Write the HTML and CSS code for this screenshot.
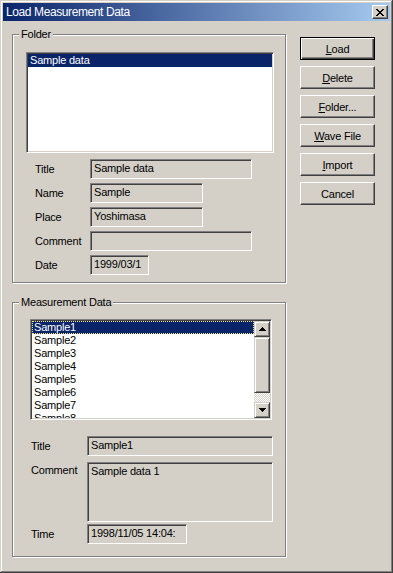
FILE: index.html
```html
<!DOCTYPE html>
<html lang="en">
<head>
  <meta charset="UTF-8">
  <meta name="viewport" content="width=device-width, initial-scale=1.0">
  <title>Load Measurement Data</title>
  <link rel="stylesheet" href="styles.css">
</head>
<body>
  <div class="window">
    <div class="titlebar">
      <span class="caption">Load Measurement Data</span>
      <span class="close-btn">
        <svg width="8" height="7" viewBox="0 0 8 7"><path d="M0 0h2v1h1v1h2V1h1V0h2v1H7v1H6v1H5v1h1v1h1v1h1v1H6V6H5V5H3v1H2v1H0V6h1V5h1V4h1V3H2V2H1V1H0z" fill="#000"/></svg>
      </span>
    </div>

    <div class="client">
      <div class="groups">
        <!-- Folder -->
        <div class="group group-folder">
          <span class="group-title">Folder</span>
          <div class="listbox folder-list">
            <div class="item selected">Sample data</div>
          </div>
          <div class="fields fields-folder">
            <div class="field"><span class="field-label">Title</span><span class="edit w-162">Sample data</span></div>
            <div class="field"><span class="field-label">Name</span><span class="edit w-113">Sample</span></div>
            <div class="field"><span class="field-label">Place</span><span class="edit w-113">Yoshimasa</span></div>
            <div class="field"><span class="field-label">Comment</span><span class="edit w-162"></span></div>
            <div class="field"><span class="field-label">Date</span><span class="edit w-59">1999/03/1</span></div>
          </div>
        </div>

        <!-- Measurement Data -->
        <div class="group group-measure">
          <span class="group-title">Measurement Data</span>
          <div class="listbox measure-list">
            <div class="items">
              <div class="item selected focused">Sample1</div>
              <div class="item">Sample2</div>
              <div class="item">Sample3</div>
              <div class="item">Sample4</div>
              <div class="item">Sample5</div>
              <div class="item">Sample6</div>
              <div class="item">Sample7</div>
              <div class="item">Sample8</div>
            </div>
            <div class="scrollbar">
              <span class="sb-btn"><svg width="7" height="4" viewBox="0 0 7 4"><path d="M3 0h1v1h1v1h1v1h1v1H0V3h1V2h1V1h1z" fill="#000"/></svg></span>
              <span class="sb-thumb"></span>
              <span class="sb-track"></span>
              <span class="sb-btn"><svg width="7" height="4" viewBox="0 0 7 4"><path d="M0 0h7v1H6v1H5v1H4v1H3V3H2V2H1V1H0z" fill="#000"/></svg></span>
            </div>
          </div>
          <div class="fields fields-measure">
            <div class="field"><span class="field-label">Title</span><span class="edit w-186">Sample1</span></div>
            <div class="field field-tall"><span class="field-label">Comment</span><span class="edit w-186 h-60">Sample data 1</span></div>
            <div class="field"><span class="field-label">Time</span><span class="edit w-100">1998/11/05 14:04:</span></div>
          </div>
        </div>
      </div>

      <div class="buttons">
        <button class="btn btn-default"><u>L</u>oad</button>
        <button class="btn"><u>D</u>elete</button>
        <button class="btn"><u>F</u>older...</button>
        <button class="btn"><u>W</u>ave File</button>
        <button class="btn"><u>I</u>mport</button>
        <button class="btn">Cancel</button>
      </div>
    </div>
  </div>
</body>
</html>
```

FILE: styles.css
```css
body {
  margin: 0;
  background-color: #d4d0c8;
  font-family: "Liberation Sans", Arial, sans-serif;
  font-size: 11px;
  letter-spacing: -0.2px;
  color: #000;
}
.window {
  width: 393px;
  height: 573px;
  box-sizing: border-box;
  padding: 3px;
  background-color: #d4d0c8;
  box-shadow: inset -1px -1px #404040, inset 1px 1px #d4d0c8, inset -2px -2px #808080, inset 2px 2px #fff;
}

/* title bar */
.titlebar {
  height: 18px;
  display: flex;
  align-items: center;
  padding: 0 2px 0 3px;
  background: linear-gradient(to right, #0a246a, #a6caf0);
}
.caption {
  color: #fff;
  font-size: 12px;
  letter-spacing: -0.4px;
  white-space: nowrap;
}
.close-btn {
  margin-left: auto;
  width: 16px;
  height: 14px;
  box-sizing: border-box;
  display: flex;
  align-items: center;
  justify-content: center;
  background-color: #d4d0c8;
  border: 1px solid;
  border-color: #fff #404040 #404040 #fff;
  box-shadow: inset -1px -1px #808080;
}

/* client area */
.client {
  display: flex;
  align-items: flex-start;
  padding: 13px 0 0 9px;
}
.groups {
  width: 274px;
}
.group {
  box-sizing: border-box;
  width: 274px;
  border: 1px solid #808080;
  box-shadow: 1px 1px 0 #fff, inset 1px 1px 0 #fff;
}
.group-folder {
  height: 249px;
}
.group-measure {
  height: 255px;
  margin-top: 19px;
}
.group-title {
  display: table;
  margin: -7px 0 0 6px;
  padding: 0 2px;
  line-height: 13px;
  background-color: #d4d0c8;
}

/* list boxes */
.listbox {
  box-sizing: border-box;
  background-color: #fff;
  border: 1px solid;
  border-color: #808080 #fff #fff #808080;
  box-shadow: inset 1px 1px #404040, inset -1px -1px #d4d0c8;
  padding: 1px;
  overflow: hidden;
}
.folder-list {
  width: 248px;
  height: 101px;
  margin: 11px 0 0 13px;
}
.measure-list {
  width: 242px;
  height: 101px;
  margin: 10px 0 0 17px;
  display: flex;
}
.items {
  flex: 1;
  overflow: hidden;
}
.item {
  height: 13px;
  line-height: 13px;
  padding-left: 2px;
  white-space: nowrap;
}
.item.selected {
  background-color: #0a246a;
  color: #fff;
}
.item.focused {
  box-sizing: border-box;
  padding-left: 1px;
  border: 1px dotted #f4e88a;
  line-height: 11px;
}

/* scroll bar */
.scrollbar {
  width: 16px;
  display: flex;
  flex-direction: column;
}
.sb-btn, .sb-thumb {
  box-sizing: border-box;
  background-color: #d4d0c8;
  border: 1px solid;
  border-color: #d4d0c8 #404040 #404040 #d4d0c8;
  box-shadow: inset 1px 1px #fff, inset -1px -1px #808080;
}
.sb-btn {
  height: 16px;
  display: flex;
  align-items: center;
  justify-content: center;
}
.sb-thumb {
  height: 56px;
}
.sb-track {
  flex: 1;
  background: repeating-conic-gradient(#fff 0 25%, #d4d0c8 0 50%) 0 0 / 2px 2px;
}

/* label + edit rows */
.fields-folder {
  margin-top: 6px;
  padding-left: 22px;
}
.fields-folder .field-label {
  width: 55px;
}
.fields-measure {
  margin-top: 16px;
  padding-left: 18px;
}
.fields-measure .field-label {
  width: 56px;
}
.field {
  display: flex;
  align-items: center;
  margin-bottom: 4px;
}
.field-tall {
  align-items: flex-start;
  margin-top: 6px;
  margin-bottom: 2px;
}
.field-tall .field-label {
  padding-top: 2px;
}
.field-label {
  flex-shrink: 0;
  line-height: 13px;
}
.edit {
  box-sizing: border-box;
  height: 20px;
  padding: 2px 3px 0;
  line-height: 13px;
  white-space: nowrap;
  overflow: hidden;
  background-color: #d4d0c8;
  border: 1px solid;
  border-color: #808080 #fff #fff #808080;
  box-shadow: inset 1px 1px #404040, inset -1px -1px #d4d0c8;
}
.w-59 { width: 59px; }
.w-100 { width: 100px; }
.w-113 { width: 113px; }
.w-162 { width: 162px; }
.w-186 { width: 186px; }
.h-60 { height: 60px; }

/* push buttons */
.buttons {
  display: flex;
  flex-direction: column;
  gap: 6px;
  margin: 3px 0 0 14px;
}
.btn {
  box-sizing: border-box;
  width: 75px;
  height: 23px;
  padding: 0;
  font: inherit;
  letter-spacing: inherit;
  color: #000;
  background-color: #d4d0c8;
  border: 1px solid;
  border-color: #fff #404040 #404040 #fff;
  box-shadow: inset -1px -1px #808080;
}
.btn-default {
  border-color: #000;
  box-shadow: inset 1px 1px #fff, inset -1px -1px #404040, inset -2px -2px #808080;
}
```
